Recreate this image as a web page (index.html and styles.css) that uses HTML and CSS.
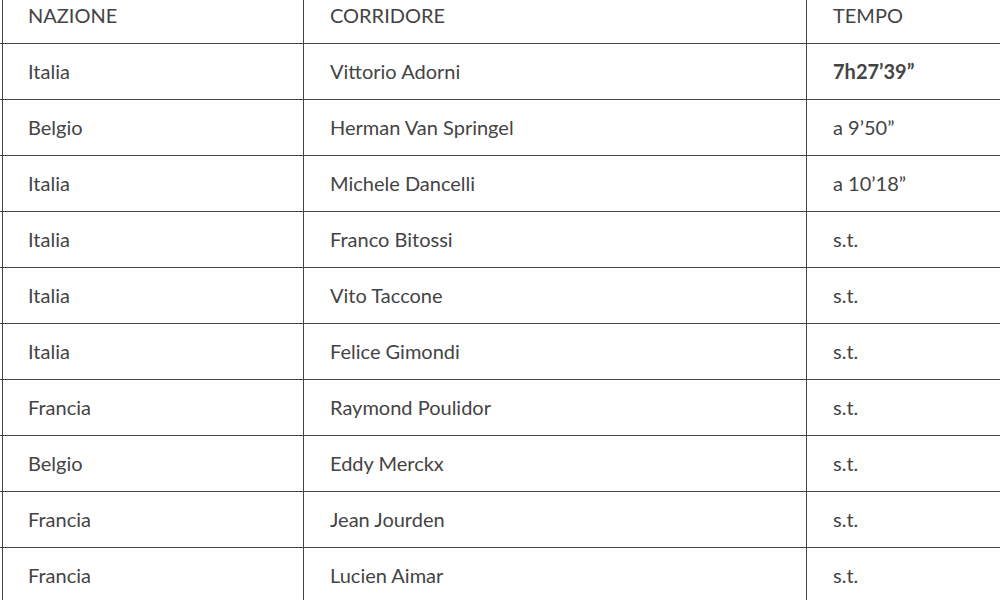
FILE: index.html
```html
<!DOCTYPE html>
<html lang="it">
<head>
<meta charset="utf-8">
<title>Classifica</title>
<link rel="stylesheet" href="styles.css">
</head>
<body>
<div class="wrap">
<table class="results">
<colgroup><col class="c1"><col class="c2"><col class="c3"></colgroup>
<thead>
<tr><th>NAZIONE</th><th>CORRIDORE</th><th>TEMPO</th></tr>
</thead>
<tbody>
<tr><td>Italia</td><td>Vittorio Adorni</td><td><strong>7h27’39”</strong></td></tr>
<tr><td>Belgio</td><td>Herman Van Springel</td><td>a 9’50”</td></tr>
<tr><td>Italia</td><td>Michele Dancelli</td><td>a 10’18”</td></tr>
<tr><td>Italia</td><td>Franco Bitossi</td><td>s.t.</td></tr>
<tr><td>Italia</td><td>Vito Taccone</td><td>s.t.</td></tr>
<tr><td>Italia</td><td>Felice Gimondi</td><td>s.t.</td></tr>
<tr><td>Francia</td><td>Raymond Poulidor</td><td>s.t.</td></tr>
<tr><td>Belgio</td><td>Eddy Merckx</td><td>s.t.</td></tr>
<tr><td>Francia</td><td>Jean Jourden</td><td>s.t.</td></tr>
<tr><td>Francia</td><td>Lucien Aimar</td><td>s.t.</td></tr>
</tbody>
</table>
</div>
</body>
</html>
```
FILE: styles.css
```css
html, body {
  margin: 0;
  padding: 0;
  background: #fff;
  overflow: hidden;
}
.wrap {
  width: 1000px;
  height: 600px;
  overflow: hidden;
}
.results {
  margin-top: -12px;
  border-collapse: separate;
  border-spacing: 0;
  table-layout: fixed;
  width: 1106px;
  font-family: Lato, "Open Sans", sans-serif;
  font-size: 20px;
  color: #444;
}
.c1 { width: 303px; }
.c2 { width: 503px; }
.c3 { width: 300px; }
.results th,
.results td {
  box-sizing: border-box;
  text-align: left;
  font-weight: 400;
  line-height: 27px;
  padding: 14px 25px;
  border-bottom: 1px solid #444;
  white-space: nowrap;
}
.results th + th,
.results td + td {
  border-left: 1px solid #444;
  padding-left: 26px;
}
.results th:first-child,
.results td:first-child {
  padding-left: 28px;
  background-image: linear-gradient(to right, transparent 2px, #444 2px, #444 3px, transparent 3px);
}
.results strong {
  font-weight: 700;
}
```
